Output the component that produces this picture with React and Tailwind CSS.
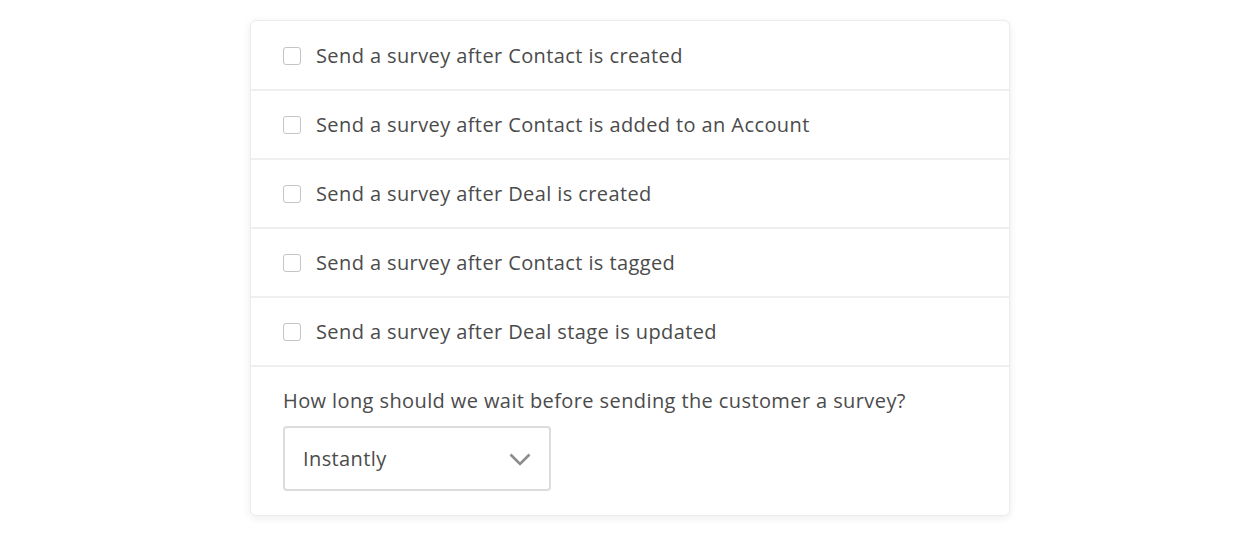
import React, { useState } from "react";

const triggers = [
  "Send a survey after Contact is created",
  "Send a survey after Contact is added to an Account",
  "Send a survey after Deal is created",
  "Send a survey after Contact is tagged",
  "Send a survey after Deal stage is updated",
];

export default function App() {
  const [checked, setChecked] = useState({});

  return (
    <div className="min-h-screen bg-white pt-5 font-['Open_Sans','Lato',sans-serif] tracking-[0.4px] text-[#4b4b4b]">
      <div className="mx-auto w-[760px] rounded-md border border-[#ececec] bg-white shadow-[0_2px_8px_rgba(0,0,0,0.08)]">
        {triggers.map((label, i) => (
          <label
            key={label}
            className={`flex cursor-pointer items-center gap-[15px] border-b-2 border-[#efefef] px-8 ${i === 0 ? "h-[70px] pt-[2px]" : "h-[69px]"}`}
          >
            <input
              type="checkbox"
              checked={!!checked[i]}
              onChange={() => setChecked({ ...checked, [i]: !checked[i] })}
              className="h-[18px] w-[18px] appearance-none rounded-[3px] border border-[#c4c4c4] bg-white"
            />
            <span className="text-[20px]">{label}</span>
          </label>
        ))}
        <div className="px-8 pb-[24px] pt-[21px]">
          <div className="text-[20px] leading-[26px]">How long should we wait before sending the customer a survey?</div>
          <div className="mt-[12px] flex h-[65px] w-[268px] items-center justify-between rounded-[4px] border-2 border-[#dcdcdc] pl-[18px] pr-[18px]">
            <span className="text-[20px]">Instantly</span>
            <svg width="22" height="13" viewBox="0 0 22 13" fill="none" className="mt-[2px]">
              <polyline points="1.5,1.5 11,11 20.5,1.5" stroke="#8c8c8c" strokeWidth="2.6" />
            </svg>
          </div>
        </div>
      </div>
    </div>
  );
}
